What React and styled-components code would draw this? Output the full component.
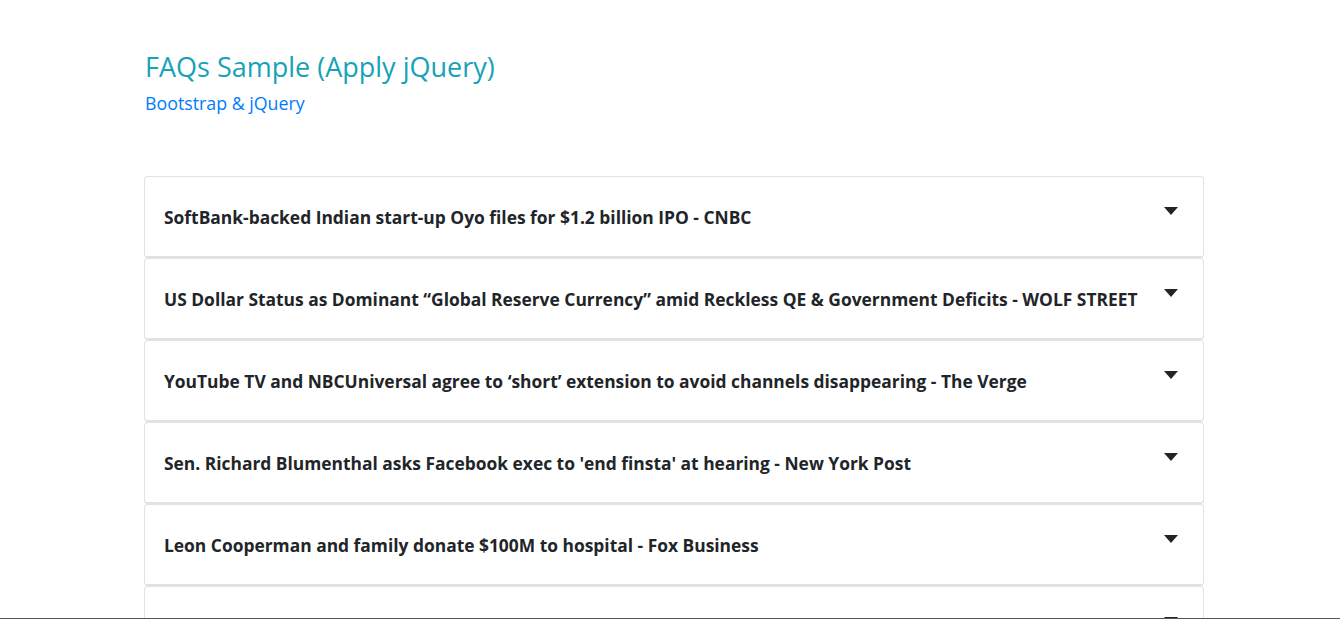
import React from "react";
import styled, { createGlobalStyle } from "styled-components";

const Global = createGlobalStyle`
  html, body { margin: 0; padding: 0; background: #fff; }
  body { font-family: "Open Sans", "Noto Sans", Arial, sans-serif; color: #212529; }
`;

const Page = styled.div`
  width: 1060px;
  margin: 0 0 0 144px;
  padding-top: 48px;
`;

const Header = styled.header`
  display: flex;
  flex-direction: column;
  gap: 5px;
  padding-left: 1px;
  margin-bottom: 61px;
`;

const Title = styled.h3`
  margin: 0;
  font-size: 27px;
  font-weight: 500;
  color: #17a2b8;
  line-height: 38px;
`;

const Subtitle = styled.a`
  font-size: 17.8px;
  font-weight: 500;
  color: #007bff;
  line-height: 24px;
  text-decoration: none;
`;

const List = styled.div`
  display: flex;
  flex-direction: column;
`;

const Card = styled.div`
  display: flex;
  align-items: center;
  justify-content: space-between;
  height: 82px;
  box-sizing: border-box;
  border: 1px solid #dfe2e6;
  border-bottom-width: 2px;
  border-radius: 4px;
  padding: 0 25px 0 19px;
  background: #fff;
`;

const Question = styled.h5`
  margin: 0;
  padding-top: 1px;
  font-size: 17.4px;
  font-weight: 700;
  color: #212529;
  line-height: 26px;
`;

const Caret = styled.svg`
  flex: none;
  align-self: flex-start;
  margin-top: 30px;
  width: 14px;
  height: 9px;
`;

const BottomEdge = styled.div`
  position: fixed;
  left: 0;
  right: 0;
  bottom: 0;
  height: 1px;
  background: #555;
`;

const items = [
  "SoftBank-backed Indian start-up Oyo files for $1.2 billion IPO - CNBC",
  "US Dollar Status as Dominant \u201cGlobal Reserve Currency\u201d amid Reckless QE & Government Deficits - WOLF STREET",
  "YouTube TV and NBCUniversal agree to \u2018short\u2019 extension to avoid channels disappearing - The Verge",
  "Sen. Richard Blumenthal asks Facebook exec to 'end finsta' at hearing - New York Post",
  "Leon Cooperman and family donate $100M to hospital - Fox Business",
  "",
];

export default function App() {
  return (
    <>
      <Global />
      <Page>
        <Header>
          <Title>FAQs Sample (Apply jQuery)</Title>
          <Subtitle href="#">Bootstrap &amp; jQuery</Subtitle>
        </Header>
        <List>
          {items.map((q, i) => (
            <Card key={i}>
              <Question>{q}</Question>
              <Caret viewBox="0 0 14 9">
                <path d="M0 0 H14 L7 8 Z" fill="#212529" />
              </Caret>
            </Card>
          ))}
        </List>
      </Page>
      <BottomEdge />
    </>
  );
}
